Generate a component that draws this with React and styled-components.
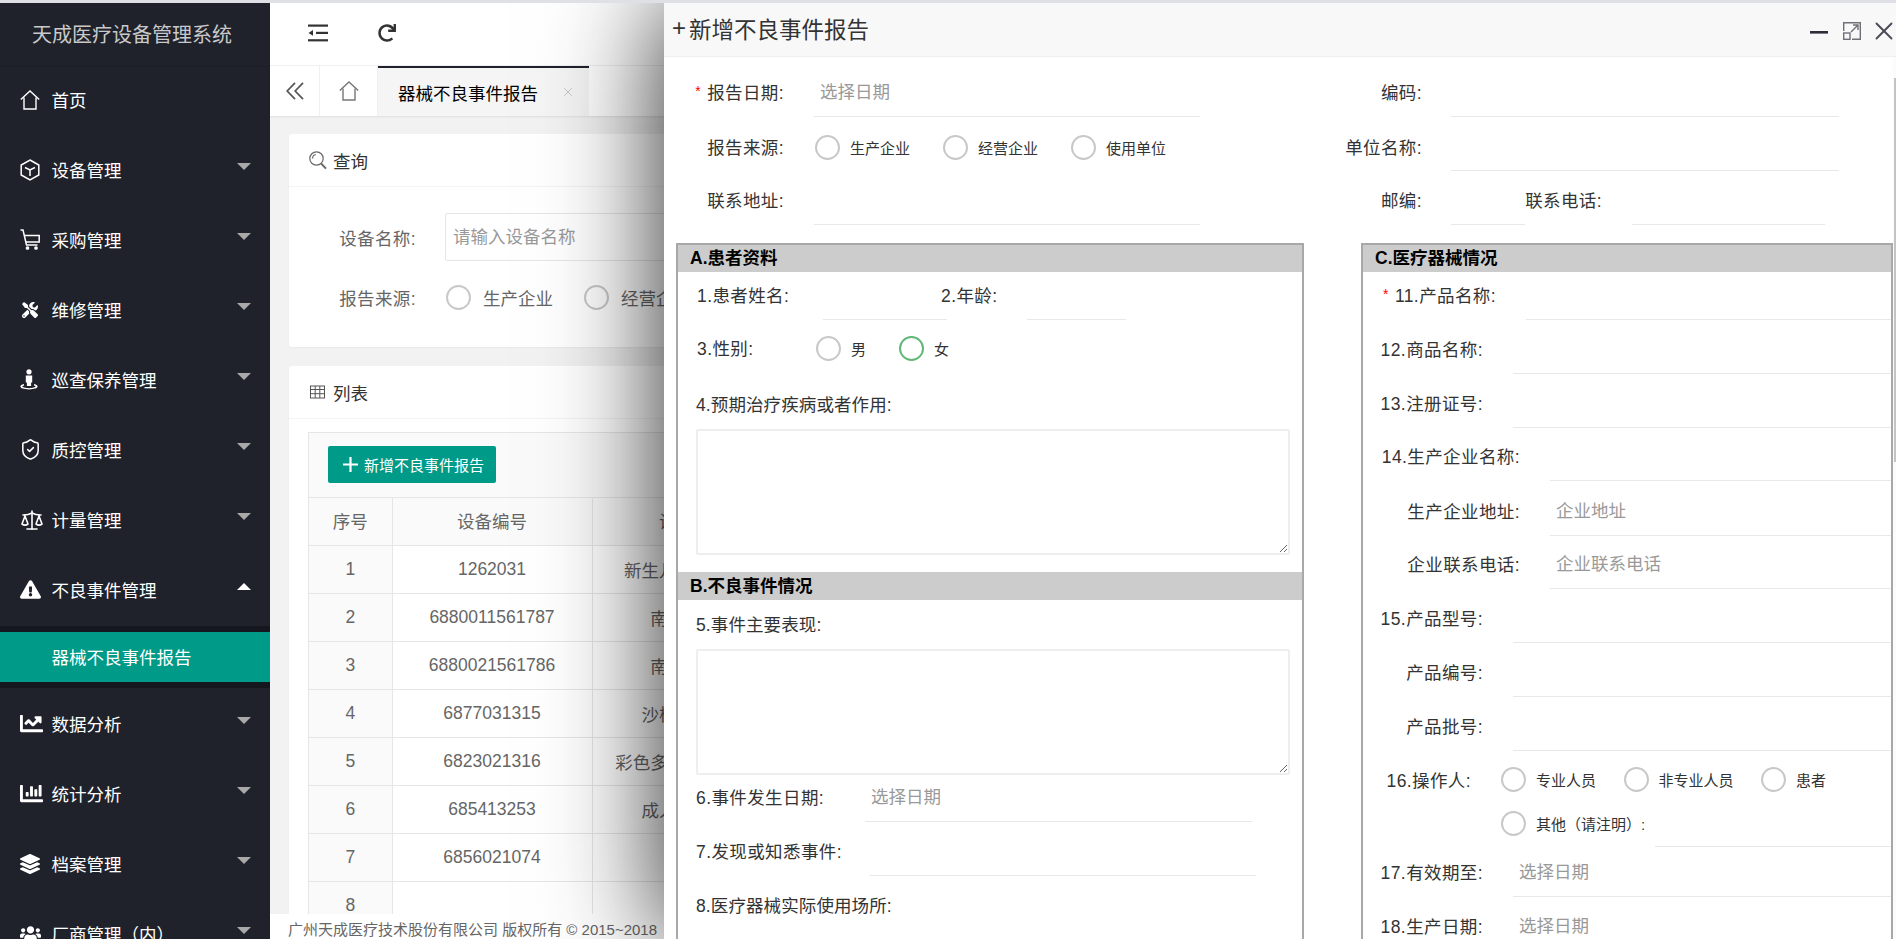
import styled, { createGlobalStyle } from "styled-components";
import { Scale, ShieldCheck, X } from "lucide-react";
import {
  FaChartBar,
  FaChartLine,
  FaExclamationTriangle,
  FaLayerGroup,
  FaRedo,
  FaTools,
  FaUsers,
} from "react-icons/fa";

const FONT = `"Liberation Sans", "Noto Sans CJK SC", sans-serif`;

const GlobalStyle = createGlobalStyle`
  html, body { margin: 0; padding: 0; height: 100%; overflow: hidden; background: #fff; }
  body { font-family: ${FONT}; font-size: 17.5px; color: #333; }
  * { box-sizing: border-box; }
  input, textarea { font-family: ${FONT}; font-size: 17.5px; }
`;

const HomeIcon = ({ size = 20, color = "#fff" }) => (
  <svg width={size} height={size} viewBox="0 0 20 20" fill="none" stroke={color} strokeWidth="1.4">
    <path d="M0.8 9.6 10 1l9.2 8.6" />
    <path d="M4 7.5V19h12V7.5" />
  </svg>
);

const CubeIcon = () => (
  <svg width="20" height="22" viewBox="0 0 20 22" fill="none" stroke="#fff" strokeWidth="1.5">
    <path d="M10 1 18.8 6v10L10 21 1.2 16V6z" />
    <path d="M5 8.5 10 11l5-2.5M10 11v6" />
  </svg>
);

const CartIcon = () => (
  <svg width="20" height="21" viewBox="0 0 20 21" fill="none" stroke="#fff" strokeWidth="1.5">
    <path d="M0.5 1H3l3.5 15h11" />
    <path d="M4.2 6.5h15v6.5H6" />
    <circle cx="7.5" cy="19" r="1.1" fill="#fff" />
    <circle cx="16" cy="19" r="1.1" fill="#fff" />
  </svg>
);

const PersonIcon = () => (
  <svg width="18" height="21" viewBox="0 0 18 21" fill="#fff">
    <circle cx="9" cy="2.8" r="2.6" />
    <path d="M5.8 6.5h6.4v7h-1.1v3.6H6.9v-3.6H5.8z" />
    <path d="M4 15c-2.4.5-3.6 1.4-3.6 2.6C.4 19.3 4 20.4 9 20.4s8.6-1.1 8.6-2.8c0-1.2-1.2-2.1-3.6-2.6v1.4c1 .3 1.6.7 1.6 1.2 0 .8-2.9 1.6-6.6 1.6s-6.6-.8-6.6-1.6c0-.5.6-.9 1.6-1.2z" />
  </svg>
);

const OutdentIcon = () => (
  <svg width="20" height="18" viewBox="0 0 20 18" fill="#333">
    <rect x="0" y="0.5" width="20" height="2.2" />
    <rect x="8" y="7.8" width="12" height="2.2" />
    <rect x="0" y="15.2" width="20" height="2.2" />
    <path d="M0.5 8.9 5 6v5.8z" />
  </svg>
);

const DoubleLeftIcon = () => (
  <svg width="18" height="18" viewBox="0 0 18 18" fill="none" stroke="#555" strokeWidth="1.7">
    <path d="M9 0.8 1.2 9 9 17.2" />
    <path d="M17 0.8 9.2 9 17 17.2" />
  </svg>
);

const SearchIcon = () => (
  <svg width="18" height="19" viewBox="0 0 18 19" fill="none" stroke="#666" strokeWidth="1.2">
    <circle cx="7.5" cy="7.5" r="6.7" />
    <path d="M3.6 7.5c0-2 1.4-3.7 3.2-4" />
    <path d="M12.2 12.6 17 17.6" strokeWidth="2" />
  </svg>
);

const GridIcon = () => (
  <svg width="15" height="14" viewBox="0 0 15 14" fill="none" stroke="#555" strokeWidth="1">
    <rect x="0.5" y="1" width="14" height="12" />
    <path d="M0.5 4.5h14M0.5 8.7h14M5.2 1v12M9.8 1v12" />
  </svg>
);

const PlusIcon = () => (
  <svg width="15" height="15" viewBox="0 0 15 15" stroke="#fff" strokeWidth="2.2">
    <path d="M7.5 0v15M0 7.5h15" />
  </svg>
);

const MinimizeIcon = () => (
  <svg width="18" height="3" viewBox="0 0 18 3" style={{ marginTop: 3 }}>
    <rect width="18" height="2.6" fill="#2e2d3c" />
  </svg>
);

const MaximizeIcon = () => (
  <svg width="18" height="18" viewBox="0 0 18 18" fill="none" stroke="#6f6f78" strokeWidth="1.4">
    <path d="M0.7 9V0.7h16.6v16.6H9" />
    <rect x="0.7" y="11" width="6.3" height="6.3" />
    <path d="M8 10l7-7M10 3h5v5" />
  </svg>
);

const NAV_ITEMS = [
  { label: "首页", icon: <HomeIcon />, noCaret: true },
  { label: "设备管理", icon: <CubeIcon /> },
  { label: "采购管理", icon: <CartIcon /> },
  { label: "维修管理", icon: <FaTools size={16} color="#fff" style={{ marginLeft: 2 }} /> },
  { label: "巡查保养管理", icon: <PersonIcon /> },
  { label: "质控管理", icon: <ShieldCheck size={23} color="#fff" strokeWidth={1.6} style={{ marginLeft: -1 }} /> },
  { label: "计量管理", icon: <Scale size={24} color="#fff" strokeWidth={1.6} /> },
  { label: "不良事件管理", icon: <FaExclamationTriangle size={21} color="#fff" />, open: true, children: ["器械不良事件报告"] },
  { label: "数据分析", icon: <FaChartLine size={23} color="#fff" /> },
  { label: "统计分析", icon: <FaChartBar size={23} color="#fff" /> },
  { label: "档案管理", icon: <FaLayerGroup size={20} color="#fff" /> },
  { label: "厂商管理（内）", icon: <FaUsers size={21} color="#fff" /> },
];

const TABLE_ROWS = [
  ["1", "1262031", "新生儿黄疸治疗仪"],
  ["2", "6880011561787", "南方医用床"],
  ["3", "6880021561786", "南方医用床"],
  ["4", "6877031315", "沙样治疗设备"],
  ["5", "6823021316", "彩色多普勒诊断仪器"],
  ["6", "685413253", "成人心电监护"],
  ["7", "6856021074", ""],
  ["8", "", ""],
];

const Page = styled.div`
  position: relative;
  width: 1896px;
  height: 939px;
  overflow: hidden;
`;

const TopStrip = styled.div`
  position: relative;
  z-index: 3;
  height: 3px;
  background: #dfdfe6;
`;

const Shell = styled.div`
  display: flex;
  height: 936px;
`;

const Sidebar = styled.aside`
  flex: none;
  width: 270px;
  background: #1f222b;
  color: #fff;
  overflow: hidden;
`;

const Brand = styled.div`
  height: 63px;
  padding-left: 32px;
  line-height: 64px;
  font-size: 20px;
  color: #c9c9c9;
  white-space: nowrap;
  box-shadow: 0 1px 0 #1b1e26;
`;

const NavRow = styled.div`
  display: flex;
  align-items: center;
  height: 70px;
  padding: 0 19px 3px 20px;
  white-space: nowrap;
`;

const NavIcon = styled.span`
  display: flex;
  align-items: center;
  flex: none;
  width: 31.5px;
`;

const Caret = styled.i`
  margin-left: auto;
  margin-bottom: 6px;
  width: 0;
  height: 0;
  border-left: 7.5px solid transparent;
  border-right: 7.5px solid transparent;
  ${(p) => (p.$up ? "border-bottom: 7.5px solid #fff;" : "border-top: 7.5px solid #a9a9a9;")}
`;

const SubMenu = styled.div`
  margin-bottom: 2px;
  padding: 6px 0;
  background: #15171e;
`;

const SubItem = styled.div`
  height: 50px;
  padding-left: 51.5px;
  line-height: 53px;
  background: #009a88;
  color: #fff;
`;

const Main = styled.main`
  flex: 1;
  min-width: 0;
  display: flex;
  flex-direction: column;
  background: #f2f2f2;
`;

const Header = styled.header`
  flex: none;
  display: flex;
  align-items: center;
  gap: 50px;
  height: 63px;
  padding: 0 0 2px 38px;
  background: #fff;
  border-bottom: 1px solid #f0f0f0;
`;

const TabBar = styled.nav`
  flex: none;
  display: flex;
  height: 50px;
  background: #fff;
  box-shadow: 0 1px 2px rgba(0, 0, 0, 0.08);
`;

const TabButton = styled.div`
  display: flex;
  align-items: center;
  justify-content: center;
  width: ${(p) => p.$w}px;
  border-right: 1px solid #f0f0f0;
`;

const ActiveTab = styled.div`
  display: flex;
  align-items: center;
  width: 211px;
  padding-left: 20px;
  background: #f5f5f5;
  border-top: 2px solid #1f222b;
  color: #000;
  white-space: nowrap;
`;

const TabClose = styled.span`
  display: flex;
  margin-left: 23px;
  color: #bbb;
`;

const Content = styled.div`
  flex: 1;
  min-height: 0;
  overflow: hidden;
  padding: 18px 19px 0;
`;

const Card = styled.section`
  width: 1588px;
  margin-bottom: 19px;
  background: #fff;
  border-radius: 3px;
  box-shadow: 0 1px 2px rgba(0, 0, 0, 0.04);
`;

const CardTitle = styled.div`
  display: flex;
  align-items: center;
  gap: ${(p) => p.$gap || 6}px;
  height: 53px;
  padding-left: ${(p) => p.$pl || 20}px;
  border-bottom: 1px solid #f4f4f4;
  color: #333;
`;

const QueryForm = styled.div`
  padding: 26px 0 26px;
`;

const QueryRow = styled.div`
  display: flex;
  align-items: center;
  height: 48px;
  margin-bottom: 12px;
  &:last-child { margin-bottom: 0; }
`;

const QueryLabel = styled.label`
  flex: none;
  width: 127px;
  margin-right: 29px;
  text-align: right;
  letter-spacing: 0.4px;
  color: #666;
`;

const QueryInput = styled.input`
  width: 600px;
  height: 48px;
  padding: 0 7px;
  border: 1px solid #e6e6e6;
  border-radius: 2px;
  outline: none;
  &::placeholder { color: #999; }
`;

const TableBox = styled.div`
  margin: 13px 19px 0;
  border: 1px solid #e6e6e6;
  border-bottom: 0;
`;

const Toolbar = styled.div`
  height: 64px;
  padding: 13px 0 0 19px;
  background: #fafafa;
`;

const AddButton = styled.button`
  display: flex;
  align-items: center;
  gap: 6px;
  width: 168px;
  height: 37px;
  padding: 0 0 0 15px;
  border: 0;
  border-radius: 2px;
  background: #009a88;
  color: #fff;
  font-family: ${FONT};
  font-size: 15px;
  white-space: nowrap;
`;

const Table = styled.table`
  width: 1500px;
  table-layout: fixed;
  border-collapse: collapse;
  color: #666;
`;

const HeadCell = styled.th`
  width: ${(p) => p.$w}px;
  height: 48px;
  padding: 0 0 2px;
  border: 1px solid #e6e6e6;
  border-left: 0;
  background: #fafafa;
  font-weight: 400;
`;

const Cell = styled.td`
  height: 48px;
  padding: 0;
  border: 1px solid #e6e6e6;
  border-left: 0;
  text-align: center;
  white-space: nowrap;
  background: ${(p) => (p.$index ? "#fafafa" : "#fff")};
`;

const Footer = styled.footer`
  flex: none;
  height: 25px;
  padding: 3px 0 0 18px;
  background: #fff;
  font-size: 15px;
  line-height: 25px;
  color: #666;
  white-space: nowrap;
`;

const Modal = styled.div`
  position: absolute;
  z-index: 2;
  top: 3px;
  left: 664px;
  right: 0;
  bottom: 0;
  display: flex;
  flex-direction: column;
  background: #fff;
  box-shadow: 0 0 105px rgba(0, 0, 0, 0.85);
`;

const ModalHead = styled.div`
  flex: none;
  display: flex;
  align-items: center;
  height: 54px;
  padding: 0 0 4px 8px;
  background: #f8f8f8;
  border-bottom: 1px solid #eee;
  font-size: 22.5px;
  color: #333;
`;

const TitlePlus = styled.span`
  margin-right: 3px;
  font-size: 24px;
`;

const WindowControls = styled.div`
  display: flex;
  align-items: center;
  gap: 15px;
  margin-left: auto;
  padding-top: 6px;
  color: #4a4a58;
`;

const CloseIcon = styled(X)`
  margin: -5px -3px -5px -7px;
`;

const ModalBody = styled.div`
  flex: 1;
  min-height: 0;
  display: flex;
`;

const FormArea = styled.div`
  flex: 1;
  min-width: 0;
  overflow: hidden;
  padding-top: 12px;
`;

const ScrollTrack = styled.div`
  flex: none;
  width: 3px;
  padding: 21px 0 0 1px;
  background: #fbfbfb;
`;

const ScrollThumb = styled.div`
  height: 384px;
  background: #c4c4c4;
`;

const TopForm = styled.div`
  display: grid;
  grid-template-columns: 576px 1fr;
  row-gap: 6px;
`;

const Row = styled.div`
  display: flex;
  align-items: center;
  height: ${(p) => p.$h || 48}px;
  margin-top: ${(p) => p.$mt ?? 6}px;
  padding-left: ${(p) => p.$pl || 0}px;
`;

const FieldLabel = styled.label`
  flex: none;
  width: ${(p) => p.$w}px;
  margin-left: ${(p) => p.$ml || 0}px;
  padding-bottom: ${(p) => p.$pb ?? 4}px;
  text-align: ${(p) => p.$align || "right"};
  letter-spacing: 0.4px;
  white-space: nowrap;
  color: #333;
`;

const Star = styled.span`
  margin-right: 6px;
  font-size: 14px;
  vertical-align: 3px;
  color: #f00;
`;

const LineInput = styled.input`
  align-self: stretch;
  flex: ${(p) => (p.$w ? "none" : "1")};
  width: ${(p) => (p.$w ? `${p.$w}px` : "auto")};
  min-width: 0;
  margin-left: ${(p) => p.$ml ?? 30}px;
  padding: 0 6px;
  border: 0;
  border-bottom: 1px solid #e8e8e8;
  outline: none;
  background: transparent;
  &::placeholder { color: #999; }
`;

const RadioGroup = styled.div`
  display: flex;
  align-items: center;
  gap: ${(p) => p.$gap}px;
  margin-left: ${(p) => p.$ml ?? 30}px;
`;

const RadioItem = styled.span`
  display: flex;
  align-items: center;
  gap: ${(p) => p.$space || 10}px;
  font-size: ${(p) => p.$size || 15}px;
  color: ${(p) => p.$color || "#333"};
  white-space: nowrap;
`;

const RadioDot = styled.i`
  flex: none;
  width: 25px;
  height: 25px;
  border: 2px solid ${(p) => (p.$on ? "#5fb878" : "#c8c8c8")};
  border-radius: 50%;
  background: #fff;
`;

const Sections = styled.div`
  display: flex;
  margin: 18px 0 0 12px;
`;

const SectionBox = styled.div`
  flex: none;
  width: ${(p) => p.$w}px;
  margin-right: ${(p) => p.$gap || 0}px;
  border: 2px solid #a8a8a8;
  border-bottom: 0;
  height: 760px;
`;

const SectionHead = styled.h3`
  height: ${(p) => p.$h || 27}px;
  margin: ${(p) => p.$mt || 0}px 0 0;
  padding-left: 12px;
  background: #ccc;
  font-size: 17.5px;
  font-weight: 700;
  line-height: ${(p) => p.$h || 27}px;
  color: #000;
`;

const BlockLabel = styled.div`
  height: 24px;
  margin: ${(p) => p.$mt}px 0 0 18px;
  line-height: 24px;
  letter-spacing: 0.1px;
  color: #333;
`;

const Area = styled.textarea`
  display: block;
  width: 594px;
  height: 126px;
  margin: 12px 0 0 18px;
  border: 2px solid #eee;
  border-radius: 2px;
  outline: none;
`;

const Radio = ({ on, size, color, space, children }) => (
  <RadioItem $size={size} $color={color} $space={space}>
    <RadioDot $on={on} />
    {children}
  </RadioItem>
);

const Field = ({ w, star, label, placeholder, pl, mt }) => (
  <Row $mt={mt} $pl={pl}>
    <FieldLabel $w={w}>
      {star && <Star>*</Star>}
      {label}
    </FieldLabel>
    <LineInput placeholder={placeholder} />
  </Row>
);

const App = () => {
  return (
    <Page>
      <GlobalStyle />
      <TopStrip />
      <Shell>
        <Sidebar>
          <Brand>天成医疗设备管理系统</Brand>
          {NAV_ITEMS.map((item) => (
            <div key={item.label}>
              <NavRow>
                <NavIcon>{item.icon}</NavIcon>
                {item.label}
                {!item.noCaret && <Caret $up={item.open} />}
              </NavRow>
              {item.children && (
                <SubMenu>
                  {item.children.map((child) => (
                    <SubItem key={child}>{child}</SubItem>
                  ))}
                </SubMenu>
              )}
            </div>
          ))}
        </Sidebar>

        <Main>
          <Header>
            <OutdentIcon />
            <FaRedo size={18} color="#333" />
          </Header>
          <TabBar>
            <TabButton $w={50}>
              <DoubleLeftIcon />
            </TabButton>
            <TabButton $w={58}>
              <HomeIcon color="#777" />
            </TabButton>
            <ActiveTab>
              器械不良事件报告
              <TabClose>
                <X size={14} strokeWidth={1.4} />
              </TabClose>
            </ActiveTab>
          </TabBar>
          <Content>
            <Card>
              <CardTitle>
                <SearchIcon />
                查询
              </CardTitle>
              <QueryForm>
                <QueryRow>
                  <QueryLabel>设备名称:</QueryLabel>
                  <QueryInput placeholder="请输入设备名称" />
                </QueryRow>
                <QueryRow>
                  <QueryLabel>报告来源:</QueryLabel>
                  <RadioGroup $gap={31} $ml={1}>
                    <Radio size={17.5} color="#666" space={12}>生产企业</Radio>
                    <Radio size={17.5} color="#666" space={12}>经营企业</Radio>
                    <Radio size={17.5} color="#666" space={12}>使用单位</Radio>
                  </RadioGroup>
                </QueryRow>
              </QueryForm>
            </Card>
            <Card>
              <CardTitle $gap={8} $pl={21}>
                <GridIcon />
                列表
              </CardTitle>
              <TableBox>
                <Toolbar>
                  <AddButton>
                    <PlusIcon />
                    新增不良事件报告
                  </AddButton>
                </Toolbar>
                <Table>
                  <thead>
                    <tr>
                      <HeadCell $w={83}>序号</HeadCell>
                      <HeadCell $w={200}>设备编号</HeadCell>
                      <HeadCell $w={204}>设备名称</HeadCell>
                      <HeadCell>规格型号</HeadCell>
                    </tr>
                  </thead>
                  <tbody>
                    {TABLE_ROWS.map(([no, code, name]) => (
                      <tr key={no}>
                        <Cell $index>{no}</Cell>
                        <Cell>{code}</Cell>
                        <Cell>{name}</Cell>
                        <Cell />
                      </tr>
                    ))}
                  </tbody>
                </Table>
              </TableBox>
            </Card>
          </Content>
          <Footer>广州天成医疗技术股份有限公司 版权所有 © 2015~2018</Footer>
        </Main>
      </Shell>

      <Modal>
        <ModalHead>
          <TitlePlus>+</TitlePlus>新增不良事件报告
          <WindowControls>
            <MinimizeIcon />
            <MaximizeIcon />
            <CloseIcon size={30} strokeWidth={1.5} />
          </WindowControls>
        </ModalHead>
        <ModalBody>
          <FormArea>
            <TopForm>
              <Row $mt={0}>
                <FieldLabel $w={120}>
                  <Star>*</Star>报告日期:
                </FieldLabel>
                <LineInput $w={386} placeholder="选择日期" />
              </Row>
              <Row $mt={0}>
                <FieldLabel $w={182}>编码:</FieldLabel>
                <LineInput $w={388} $ml={29} />
              </Row>
              <Row $mt={0}>
                <FieldLabel $w={120} $pb={2}>报告来源:</FieldLabel>
                <RadioGroup $gap={33} $ml={31}>
                  <Radio>生产企业</Radio>
                  <Radio>经营企业</Radio>
                  <Radio>使用单位</Radio>
                </RadioGroup>
              </Row>
              <Row $mt={0}>
                <FieldLabel $w={182} $pb={2}>单位名称:</FieldLabel>
                <LineInput $w={388} $ml={29} />
              </Row>
              <Row $mt={0}>
                <FieldLabel $w={120}>联系地址:</FieldLabel>
                <LineInput $w={386} />
              </Row>
              <Row $mt={0}>
                <FieldLabel $w={182}>邮编:</FieldLabel>
                <LineInput $w={74} $ml={29} />
                <FieldLabel $w={77}>联系电话:</FieldLabel>
                <LineInput $w={193} />
              </Row>
            </TopForm>

            <Sections>
              <SectionBox $w={628} $gap={57}>
                <SectionHead>A.患者资料</SectionHead>
                <Row $mt={0} $pl={19}>
                  <FieldLabel $w={126} $align="left">1.患者姓名:</FieldLabel>
                  <LineInput $w={124} $ml={0} />
                  <FieldLabel $w={59} $ml={-6} $align="left">2.年龄:</FieldLabel>
                  <LineInput $w={99} $ml={27} />
                </Row>
                <Row $mt={4} $pl={19}>
                  <FieldLabel $w={119} $align="left" $pb={2}>3.性别:</FieldLabel>
                  <RadioGroup $gap={33} $ml={0}>
                    <Radio>男</Radio>
                    <Radio on>女</Radio>
                  </RadioGroup>
                </Row>
                <BlockLabel $mt={21}>4.预期治疗疾病或者作用:</BlockLabel>
                <Area />
                <SectionHead $mt={17} $h={28}>B.不良事件情况</SectionHead>
                <BlockLabel $mt={13}>5.事件主要表现:</BlockLabel>
                <Area />
                <Row $mt={-1} $pl={18}>
                  <FieldLabel $w={169} $align="left">6.事件发生日期:</FieldLabel>
                  <LineInput $w={387} $ml={0} placeholder="选择日期" />
                </Row>
                <Row $pl={18}>
                  <FieldLabel $w={174} $align="left">7.发现或知悉事件:</FieldLabel>
                  <LineInput $w={386} $ml={0} />
                </Row>
                <BlockLabel $mt={18}>8.医疗器械实际使用场所:</BlockLabel>
                <Row $mt={11} $pl={29}>
                  <RadioDot />
                </Row>
              </SectionBox>

              <SectionBox $w={532}>
                <SectionHead>C.医疗器械情况</SectionHead>
                <Field mt={0} w={133} star label="11.产品名称:" />
                <Field w={120} label="12.商品名称:" />
                <Field w={120} label="13.注册证号:" />
                <Field mt={5} w={157} label="14.生产企业名称:" />
                <Field mt={7} w={157} label="生产企业地址:" placeholder="企业地址" />
                <Field mt={5} w={157} label="企业联系电话:" placeholder="企业联系电话" />
                <Field w={120} label="15.产品型号:" />
                <Field w={120} label="产品编号:" />
                <Field w={120} label="产品批号:" />
                <Row $mt={9} $h={39}>
                  <FieldLabel $w={108} $pb={0}>16.操作人:</FieldLabel>
                  <RadioGroup $gap={27.5}>
                    <Radio>专业人员</Radio>
                    <Radio>非专业人员</Radio>
                    <Radio>患者</Radio>
                  </RadioGroup>
                </Row>
                <Row $mt={0}>
                  <RadioGroup $ml={138}>
                    <Radio>其他（请注明）:</Radio>
                  </RadioGroup>
                  <LineInput $ml={10} />
                </Row>
                <Field mt={2} w={120} label="17.有效期至:" placeholder="选择日期" />
                <Field w={120} label="18.生产日期:" placeholder="选择日期" />
              </SectionBox>
            </Sections>
          </FormArea>
          <ScrollTrack>
            <ScrollThumb />
          </ScrollTrack>
        </ModalBody>
      </Modal>
    </Page>
  );
};

export default App;
